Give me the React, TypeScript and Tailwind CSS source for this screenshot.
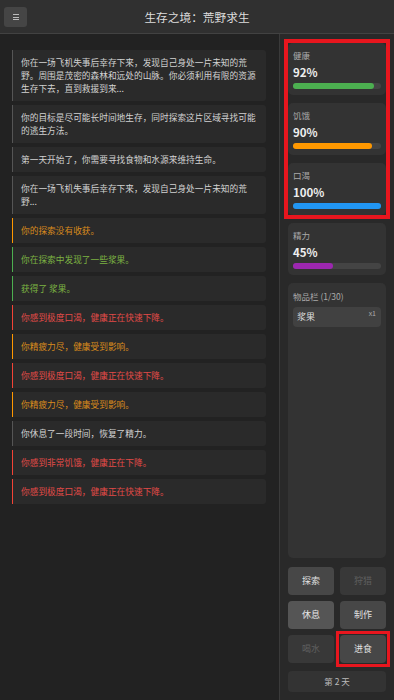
import React from "react";

type Tone = "normal" | "warn" | "good" | "bad";

const logs: { text: string; tone: Tone }[] = [
  { text: "你在一场飞机失事后幸存下来，发现自己身处一片未知的荒野。周围是茂密的森林和远处的山脉。你必须利用有限的资源生存下去，直到救援到来...", tone: "normal" },
  { text: "你的目标是尽可能长时间地生存，同时探索这片区域寻找可能的逃生方法。", tone: "normal" },
  { text: "第一天开始了，你需要寻找食物和水源来维持生命。", tone: "normal" },
  { text: "你在一场飞机失事后幸存下来，发现自己身处一片未知的荒野...", tone: "normal" },
  { text: "你的探索没有收获。", tone: "warn" },
  { text: "你在探索中发现了一些浆果。", tone: "good" },
  { text: "获得了 浆果。", tone: "good" },
  { text: "你感到极度口渴，健康正在快速下降。", tone: "bad" },
  { text: "你精疲力尽，健康受到影响。", tone: "warn" },
  { text: "你感到极度口渴，健康正在快速下降。", tone: "bad" },
  { text: "你精疲力尽，健康受到影响。", tone: "warn" },
  { text: "你休息了一段时间，恢复了精力。", tone: "normal" },
  { text: "你感到非常饥饿，健康正在下降。", tone: "bad" },
  { text: "你感到极度口渴，健康正在快速下降。", tone: "bad" },
];

const toneClass: Record<Tone, string> = {
  normal: "border-[#555] text-[#d2d2d2]",
  warn: "border-[#ff9800] text-[#d98b1c]",
  good: "border-[#4caf50] text-[#7cb342]",
  bad: "border-[#f44336] text-[#e24a48]",
};

function Stat({ label, value, bar }: { label: string; value: number; bar: string }) {
  return (
    <div className="flex h-[52px] flex-col rounded-[5px] bg-[#333] px-[5px] pt-[7px]">
      <div className="text-[8.5px] leading-[11px] text-[#aaa]">{label}</div>
      <div className="mt-[4px] text-[11.5px] font-bold leading-[14px] text-[#eee]">{value}%</div>
      <div className="mt-[4px] h-[5.5px] w-full rounded-full bg-[#444]">
        <div className={`h-full rounded-full ${bar}`} style={{ width: `${value}%` }} />
      </div>
    </div>
  );
}

function ActionButton({ label, tone }: { label: string; tone: "on" | "hi" | "off" }) {
  const cls =
    tone === "hi"
      ? "bg-[#555] text-[#e6e6e6]"
      : tone === "on"
        ? "bg-[#474747] text-[#e0e0e0]"
        : "bg-[#383838] text-[#5f5f5f]";
  return (
    <button className={`flex h-[28px] w-full items-center justify-center rounded-[4px] text-[9px] ${cls}`}>{label}</button>
  );
}

export default function App() {
  return (
    <div
      className="flex h-[700px] w-[394px] flex-col overflow-hidden bg-[#222]"
      style={{ fontFamily: '"Noto Sans CJK SC", "Noto Sans", sans-serif' }}
    >
      {/* top bar */}
      <header className="relative flex h-[34px] shrink-0 items-center justify-center border-b border-[#424242] bg-[#303030]">
        <button className="absolute left-[4px] top-[7px] flex h-[20px] w-[23px] flex-col items-center justify-center gap-[1.5px] rounded-[3px] bg-[#454545]">
          <span className="h-px w-[6px] bg-[#bbb]" />
          <span className="h-px w-[6px] bg-[#bbb]" />
          <span className="h-px w-[6px] bg-[#bbb]" />
        </button>
        <h1 className="text-[11.7px] leading-[16px] text-[#ddd]">生存之境：荒野求生</h1>
      </header>

      <div className="flex min-h-0 flex-1">
        {/* story log */}
        <main className="flex w-[279px] flex-col gap-[4px] pl-[12px] pr-[13px] pt-[16px]">
          {logs.map((l, i) => (
            <div
              key={i}
              className={`rounded-r-[3px] border-l-[1.5px] bg-[#2a2a2a] py-[6px] pl-[8px] pr-[6px] text-[8.7px] leading-[13px] ${toneClass[l.tone]}`}
            >
              {l.text}
            </div>
          ))}
        </main>

        {/* status side panel */}
        <aside className="flex w-[115px] flex-col border-l border-[#3a3a3a] bg-[#292929] px-[8px] pb-[8px] pt-[9px]">
          <div className="flex flex-col gap-[8px] outline-4 outline-[#e8161e]">
            <Stat label="健康" value={92} bar="bg-[#4caf50]" />
            <Stat label="饥饿" value={90} bar="bg-[#ff9800]" />
            <Stat label="口渴" value={100} bar="bg-[#2196f3]" />
          </div>
          <div className="mt-[8px]">
            <Stat label="精力" value={45} bar="bg-[#9c27b0]" />
          </div>
          <div className="mt-[8px] flex min-h-0 flex-1 flex-col rounded-[5px] bg-[#333] px-[5px] pt-[7px]">
            <div className="text-[8.5px] leading-[12px] text-[#aaa]">物品栏 (1/30)</div>
            <div className="mt-[5px] flex h-[20px] items-start justify-between rounded-[4px] bg-[#414141] pl-[4px] pr-[5px]">
              <span className="self-center text-[9px] leading-[12px] text-[#ddd]">浆果</span>
              <span className="mt-[2px] text-[7px] leading-[9px] text-[#aaa]">x1</span>
            </div>
          </div>
          <div className="mt-[9px] grid grid-cols-2 gap-x-[6px] gap-y-[6px]">
            <ActionButton label="探索" tone="on" />
            <ActionButton label="狩猎" tone="off" />
            <ActionButton label="休息" tone="hi" />
            <ActionButton label="制作" tone="on" />
            <ActionButton label="喝水" tone="off" />
            <div className="outline-[3px] outline-offset-[1px] outline-[#e8161e]">
              <ActionButton label="进食" tone="on" />
            </div>
          </div>
          <div className="mt-[8px] flex h-[21px] items-center justify-center rounded-[4px] bg-[#333] text-[8.5px] text-[#bbb]">
            第 2 天
          </div>
        </aside>
      </div>
    </div>
  );
}
